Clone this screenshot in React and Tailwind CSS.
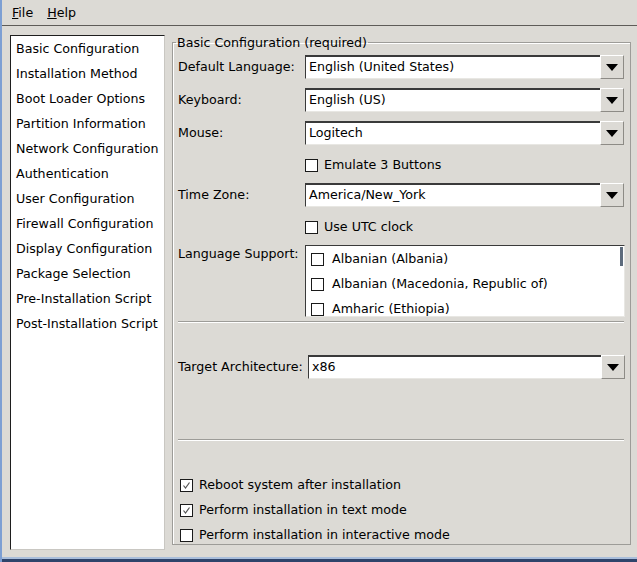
import React from 'react';

const SECCIONES = [
  'Basic Configuration',
  'Installation Method',
  'Boot Loader Options',
  'Partition Information',
  'Network Configuration',
  'Authentication',
  'User Configuration',
  'Firewall Configuration',
  'Display Configuration',
  'Package Selection',
  'Pre-Installation Script',
  'Post-Installation Script',
];

const IDIOMAS = ['Albanian (Albania)', 'Albanian (Macedonia, Republic of)', 'Amharic (Ethiopia)'];

function Flecha() {
  return (
    <svg width="12" height="7" viewBox="0 0 12 7">
      <path d="M0 0 H12 L6 7 Z" fill="#000" />
    </svg>
  );
}

function Combo({ value, width = 'w-[319px]' }) {
  return (
    <div className={`flex h-[24px] ${width}`}>
      <div className="flex-1 flex items-center bg-white border-t-2 border-l border-[#3a3a3a] border-b border-b-[#e8e7e3] pl-[3px] leading-none">
        {value}
      </div>
      <div className="w-[24px] flex items-center justify-center bg-[#dcdad5] border-t border-l border-white border-r border-b border-r-[#8d8b86] border-b-[#8d8b86]">
        <Flecha />
      </div>
    </div>
  );
}

function Casilla({ checked }) {
  return (
    <span className="w-[13px] h-[13px] shrink-0 bg-white border border-[#1a1a1a] flex items-center justify-center">
      {checked && (
        <svg width="9" height="9" viewBox="0 0 9 9">
          <path d="M1.5 4.5 L3.5 7 L7.5 1.5" fill="none" stroke="#555" strokeWidth="1.2" />
        </svg>
      )}
    </span>
  );
}

function Separador() {
  return <div className="w-[446px] border-t border-[#9d9c98] border-b border-b-white" />;
}

export default function App() {
  return (
    <div
      className="w-[637px] h-[562px] bg-[#dcdad5] flex flex-col border-l-2 border-[#7d9fd3] text-[12.65px] text-black overflow-hidden"
      style={{ fontFamily: '"DejaVu Sans", sans-serif' }}
    >
      {/* Barra de menú */}
      <div className="h-[26px] shrink-0 flex items-center gap-[14px] pl-[10px] pt-[1px] border-b border-[#5e5c58]">
        <span>
          <span className="underline">F</span>ile
        </span>
        <span>
          <span className="underline">H</span>elp
        </span>
      </div>

      <div className="flex flex-1 pt-[9px] pl-[8px] pr-[6px]">
        {/* Lista de secciones */}
        <div className="w-[155px] h-[515px] bg-white border-t border-l border-[#1e1e1e] border-b border-r border-b-[#c9c7c2] border-r-[#c9c7c2] pl-[5px] pt-[1px]">
          {SECCIONES.map((s) => (
            <div key={s} className="h-[25px] flex items-center whitespace-nowrap">
              {s}
            </div>
          ))}
        </div>

        {/* Marco principal */}
        <fieldset className="ml-[7px] w-[459px] h-[510px] border border-[#9d9c98] shadow-[inset_1px_1px_0_#fff] pl-[5px]">
          <legend className="ml-[-2px] px-[1px] leading-[15px]">Basic Configuration (required)</legend>

          <div className="flex flex-col">
            <div className="flex items-center mt-[5px]">
              <span className="w-[127px]">Default Language:</span>
              <Combo value="English (United States)" />
            </div>
            <div className="flex items-center mt-[9px]">
              <span className="w-[127px]">Keyboard:</span>
              <Combo value="English (US)" />
            </div>
            <div className="flex items-center mt-[9px]">
              <span className="w-[127px]">Mouse:</span>
              <Combo value="Logitech" />
            </div>
            <div className="flex items-center h-[18px] mt-[11px] pl-[127px] gap-[6px]">
              <Casilla />
              <span>Emulate 3 Buttons</span>
            </div>
            <div className="flex items-center mt-[9px]">
              <span className="w-[127px]">Time Zone:</span>
              <Combo value="America/New_York" />
            </div>
            <div className="flex items-center h-[18px] mt-[11px] pl-[127px] gap-[6px]">
              <Casilla />
              <span>Use UTC clock</span>
            </div>
            <div className="flex items-start mt-[9px]">
              <span className="w-[127px] leading-none mt-[3px] whitespace-nowrap">Language Support:</span>
              <div className="relative w-[320px] h-[72px] bg-white border-t border-l border-[#3a3a3a] border-b border-r border-b-[#e8e7e3] border-r-[#e8e7e3] overflow-hidden pl-[5px] pt-[1px]">
                {IDIOMAS.map((l) => (
                  <div key={l} className="h-[25px] flex items-center gap-[8px]">
                    <Casilla />
                    <span>{l}</span>
                  </div>
                ))}
                <div className="absolute right-[1px] top-[1px] w-[3px] h-[19px] bg-[#5d6b7c]" />
              </div>
            </div>
            <div className="mt-[4px]">
              <Separador />
            </div>
            <div className="flex items-center mt-[32px]">
              <span className="w-[130px] whitespace-nowrap">Target Architecture:</span>
              <Combo value="x86" width="w-[317px]" />
            </div>
            <div className="mt-[60px]">
              <Separador />
            </div>
            <div className="flex flex-col mt-[32px] pl-[2px]">
              {[
                ['Reboot system after installation', true],
                ['Perform installation in text mode', true],
                ['Perform installation in interactive mode', false],
              ].map(([t, c]) => (
                <div key={t} className="h-[25px] flex items-center gap-[6px]">
                  <Casilla checked={c} />
                  <span>{t}</span>
                </div>
              ))}
            </div>
          </div>
        </fieldset>
      </div>

      <div className="h-[2px] bg-[#a9bedb] shrink-0" />
      <div className="h-[3px] bg-[#2f446b] shrink-0" />
    </div>
  );
}
